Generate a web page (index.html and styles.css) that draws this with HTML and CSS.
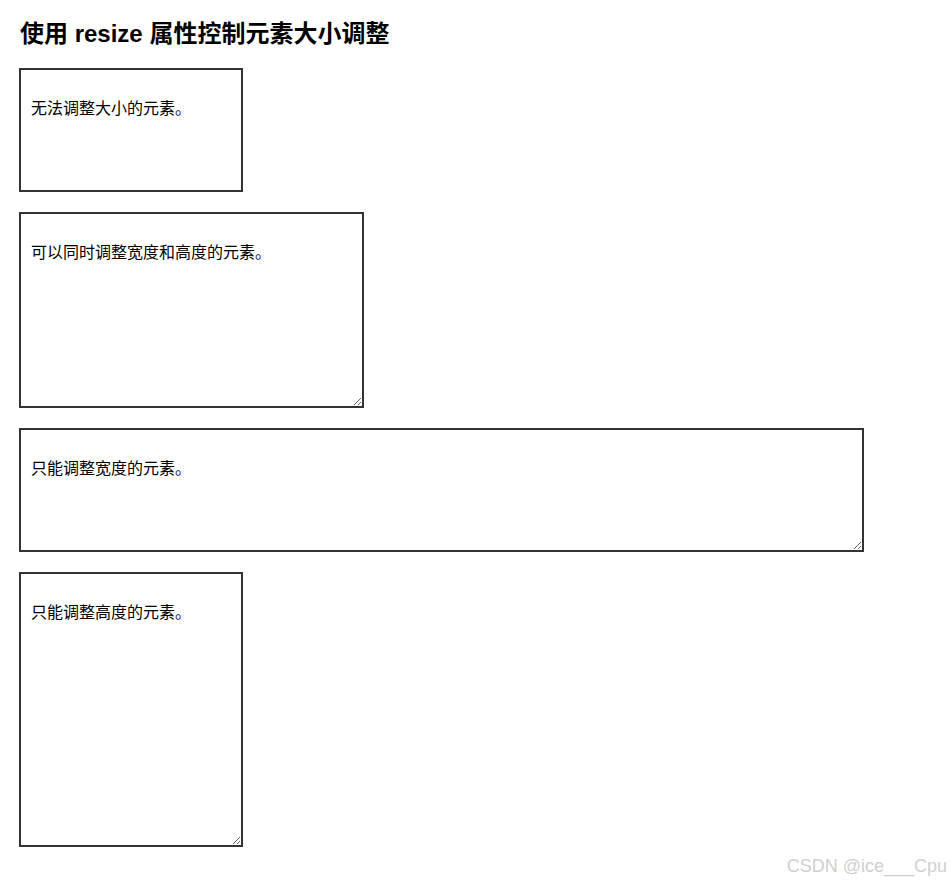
FILE: index.html
```html
<!DOCTYPE html>
<html lang="zh-CN">
<head>
<meta charset="utf-8">
<title>resize</title>
<link rel="stylesheet" href="styles.css">
</head>
<body>
<div class="page">
  <h1 class="title">使用 resize 属性控制元素大小调整</h1>
  <div class="box box-none"><p class="txt">无法调整大小的元素。</p></div>
  <div class="box box-both"><p class="txt">可以同时调整宽度和高度的元素。</p></div>
  <div class="box box-h"><p class="txt">只能调整宽度的元素。</p></div>
  <div class="box box-v"><p class="txt">只能调整高度的元素。</p></div>
</div>
<div class="watermark">CSDN @ice___Cpu</div>
</body>
</html>
```
FILE: styles.css
```css
html, body {
  margin: 0;
  padding: 0;
  background: #fff;
}
body {
  font-family: "Liberation Sans", "Noto Sans CJK SC", sans-serif;
  color: #000;
}
.page {
  padding: 0 19px 20px 19px;
  display: flex;
  flex-direction: column;
  align-items: flex-start;
}
.title {
  font-size: 24px;
  font-weight: bold;
  margin: 18px 0 18px 1px;
  line-height: 32px;
}
.box {
  border: 2px solid #333;
  padding: 10px;
  margin-bottom: 20px;
  overflow: auto;
  box-sizing: content-box;
}
.txt {
  margin: 16px 0;
  font-size: 16px;
  line-height: 22px;
  font-family: "Noto Sans CJK SC", sans-serif;
}
.box-none { width: 200px; height: 100px; resize: none; }
.box-both { width: 321px; height: 172px; resize: both; }
.box-h { width: 821px; height: 100px; resize: horizontal; }
.box-v { width: 200px; height: 251px; resize: vertical; }
.watermark {
  position: absolute;
  right: 4px;
  top: 855px;
  font-size: 18px;
  color: #d0d0d0;
  font-family: "Liberation Sans", sans-serif;
  line-height: 22px;
}
```
